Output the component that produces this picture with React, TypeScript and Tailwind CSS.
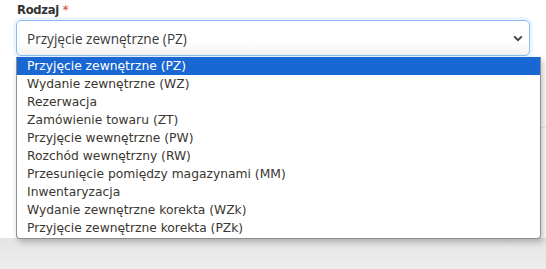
import { useState } from 'react';

const options = [
  'Przyjęcie zewnętrzne (PZ)',
  'Wydanie zewnętrzne (WZ)',
  'Rezerwacja',
  'Zamówienie towaru (ZT)',
  'Przyjęcie wewnętrzne (PW)',
  'Rozchód wewnętrzny (RW)',
  'Przesunięcie pomiędzy magazynami (MM)',
  'Inwentaryzacja',
  'Wydanie zewnętrzne korekta (WZk)',
  'Przyjęcie zewnętrzne korekta (PZk)',
];

export default function App() {
  const [selected, setSelected] = useState(0);

  return (
    <div className="relative w-[546px] h-[269px] overflow-hidden bg-white font-['DejaVu_Sans',sans-serif]">
      {/* Form field */}
      <div className="px-[16px] pt-[1px]">
        <label className="block h-[19px] pl-[1px] text-[11.6px] leading-[18px] font-bold text-[#333] tracking-[-0.3px]">
          Rodzaj <span className="text-[#e3342f] font-normal">*</span>
        </label>
        <div className="flex items-center h-[36px] rounded-[5px] border border-[#86bdf5] bg-gradient-to-b from-white from-60% to-[#f3f3f3] pl-[10px] pr-[6px] shadow-[0_0_0_3px_rgba(0,123,255,0.07)]">
          <span className="flex-1 pt-[1px] text-[13.6px] text-[#3a3a3a] font-['Open_Sans',sans-serif] leading-none">
            {options[selected]}
          </span>
          <svg width="10" height="7" viewBox="0 0 10 7" className="text-[#444]">
            <path d="M1.2 1.4 L5 5.2 L8.8 1.4" fill="none" stroke="currentColor" strokeWidth="2" />
          </svg>
        </div>
      </div>

      {/* Content behind the list */}
      <div className="h-[71px]" />
      <div className="ml-auto w-[200px] border-t border-[#ececec]" />
      <div className="h-[110px]" />
      <div className="h-[40px] bg-gradient-to-b from-[#e4e4e4] to-[#f0f0f0]" />

      {/* Open dropdown list */}
      <ul className="absolute left-[16px] top-[57px] w-[525px] h-[182px] rounded-b-[4px] border border-t-0 border-[#8f8f8f] bg-white shadow-[2px_3px_6px_rgba(0,0,0,0.25)]">
        {options.map((opt, i) => (
          <li
            key={opt}
            onClick={() => setSelected(i)}
            className={`h-[18px] pl-[10px] text-[12.3px] leading-[18px] whitespace-nowrap cursor-default ${
              i === 0 ? 'bg-[#1967d2] text-white' : 'text-[#3b3630]'
            }`}
          >
            {opt}
          </li>
        ))}
      </ul>
    </div>
  );
}
